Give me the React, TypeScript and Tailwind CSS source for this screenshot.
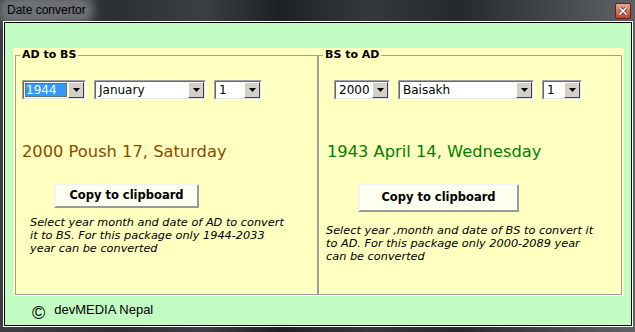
import React from 'react';

const verdana = { fontFamily: '"DejaVu Sans", Verdana, sans-serif' };

interface ComboProps {
  value: string;
  className: string;
  selected?: boolean;
}

function Combo({ value, className, selected }: ComboProps) {
  return (
    <div className={`h-[20px] flex border border-t-[#a0a0a0] border-l-[#a0a0a0] border-b-white border-r-white ${className}`}>
      <div className="flex-1 flex border border-t-[#696969] border-l-[#696969] border-b-[#e3e3e3] border-r-[#e3e3e3] bg-white">
        <div className="flex-1 flex items-center p-[1px]">
          {selected ? (
            <div className="h-full w-full flex items-center pl-[1px] bg-[#3399ff] text-white outline-1 outline-dotted outline-[#7a5a00] -outline-offset-1">
              {value}
            </div>
          ) : (
            <div className="pl-[2px] text-black">{value}</div>
          )}
        </div>
        <div className="w-[16px] flex items-center justify-center bg-[#d4d0c8] border border-t-white border-l-white border-b-[#404040] border-r-[#404040]">
          <svg width="7" height="4" viewBox="0 0 7 4">
            <path d="M0 0h7L3.5 4z" fill="#000" />
          </svg>
        </div>
      </div>
    </div>
  );
}

function CopyButton({ className }: { className: string }) {
  return (
    <button
      className={`flex items-center justify-center bg-[#fffff0] border-2 border-t-[#f4f4f4] border-l-[#f4f4f4] border-b-[#9a9a9a] border-r-[#9a9a9a] text-[11.5px] font-bold text-black ${className}`}
      style={verdana}
    >
      Copy to clipboard
    </button>
  );
}

export default function App() {
  return (
    <div className="w-[635px] h-[332px] flex flex-col bg-[linear-gradient(90deg,#3d4043_0%,#2c2f33_18%,#3b3e42_32%,#1e2124_44%,#35383c_58%,#26292c_72%,#4b4e51_90%,#5f6265_100%)] overflow-hidden">
      {/* Title bar */}
      <div className="h-[21px] flex items-start justify-between pl-[5px] pr-[4px]">
        <div
          className="mt-[2px] px-[2px] h-[16px] flex items-center text-[12px] text-black rounded-[6px] bg-[#85888b]/70 shadow-[0_0_9px_6px_rgba(140,144,148,0.65)]"
          style={{ fontFamily: '"Liberation Sans", Arial, sans-serif' }}
        >
          Date convertor
        </div>
        <div className="mt-[3px] w-[16px] h-[16px] flex items-center justify-center rounded-[2px] border border-[#5a2418] bg-[linear-gradient(180deg,#eea88f_0%,#dc6e52_50%,#c4442a_100%)]">
          <svg width="8" height="8" viewBox="0 0 8 8">
            <path d="M1 1l6 6M7 1L1 7" stroke="#3a3a3a" strokeWidth="3" strokeLinecap="square" />
            <path d="M1 1l6 6M7 1L1 7" stroke="#fff" strokeWidth="1.6" strokeLinecap="square" />
          </svg>
        </div>
      </div>

      {/* Client area */}
      <div className="flex-1 ml-[3px] mr-[2px] mb-[5px] flex border border-white">
        <div className="flex-1 flex border border-black">
          <div className="flex-1 flex flex-col bg-[#c2fcc2] pt-[25px] pl-[8px] pr-[7px]">
            <div className="h-[248px] flex bg-[#ffffc0] px-[2px] pb-[1px]" style={verdana}>
              {/* AD to BS */}
              <fieldset className="w-[303px] border border-[#a0a0a0] flex flex-col">
                <legend className="ml-[4px] px-[2px] text-[11px] leading-[14px] font-bold text-black">AD to BS</legend>
                <div className="mt-[18px] pl-[6px] flex gap-[8px] text-[12px]">
                  <Combo value="1944" className="w-[64px]" selected />
                  <Combo value="January" className="w-[112px]" />
                  <Combo value="1" className="w-[48px]" />
                </div>
                <div className="mt-[42px] pl-[6px] text-[16.3px] leading-[20px] text-[#8a4a00]">2000 Poush 17, Saturday</div>
                <CopyButton className="mt-[22px] ml-[38px] w-[145px] h-[24px]" />
                <div className="mt-[8px] ml-[14px] text-[11.3px] leading-[13px] italic text-black">
                  Select year month and date of AD to convert
                  <br />
                  it to BS. For this package only 1944-2033
                  <br />
                  year can be converted
                </div>
              </fieldset>

              {/* BS to AD */}
              <fieldset className="w-[304px] border border-[#a0a0a0] flex flex-col">
                <legend className="ml-[4px] px-[2px] text-[11px] leading-[14px] font-bold text-black">BS to AD</legend>
                <div className="mt-[18px] pl-[15px] flex gap-[8px] text-[12px]">
                  <Combo value="2000" className="w-[56px]" />
                  <Combo value="Baisakh" className="w-[136px]" />
                  <Combo value="1" className="w-[40px]" />
                </div>
                <div className="mt-[42px] pl-[8px] text-[16.3px] leading-[20px] text-[#008000]">1943 April 14, Wednesday</div>
                <CopyButton className="mt-[22px] ml-[39px] w-[161px] h-[28px]" />
                <div className="mt-[12px] ml-[7px] text-[11.3px] leading-[13px] italic text-black">
                  Select year ,month and date of BS to convert it
                  <br />
                  to AD. For this package only 2000-2089 year
                  <br />
                  can be converted
                </div>
              </fieldset>
            </div>

            {/* Footer */}
            <div className="flex-1 flex items-center pl-[19px] gap-[9px] text-black" style={{ fontFamily: '"Liberation Sans", Arial, sans-serif' }}>
              <span className="text-[18px] leading-[18px] mt-[5px]">©</span>
              <span className="text-[13px] mb-[1px]">devMEDIA Nepal</span>
            </div>
          </div>
        </div>
      </div>
    </div>
  );
}
